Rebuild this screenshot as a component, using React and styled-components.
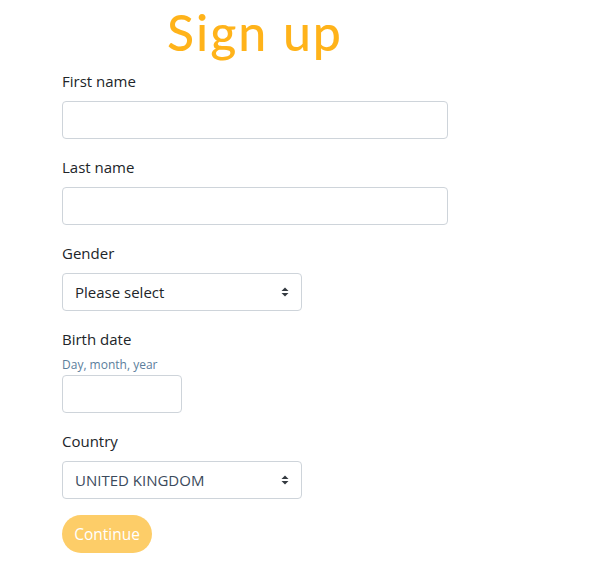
import React from "react";
import styled, { createGlobalStyle } from "styled-components";

const Global = createGlobalStyle`
  html, body { margin: 0; padding: 0; background: #fff; }
  body { font-family: "Open Sans", "Noto Sans", sans-serif; color: #212529; }
  * { box-sizing: border-box; }
`;

const Page = styled.div`
  padding: 0 0 0 62px;
`;

const Form = styled.form`
  width: 386px;
  display: flex;
  flex-direction: column;
`;

const Title = styled.h1`
  margin: 0 0 5px;
  text-align: center;
  font-family: "Lato", sans-serif;
  font-weight: 500;
  font-size: 50px;
  line-height: 64px;
  color: #ffb31a;
  letter-spacing: 2px;
`;

const Group = styled.div`
  display: flex;
  flex-direction: column;
  align-items: flex-start;
  margin-bottom: 16px;
`;

const Label = styled.label`
  font-size: 15px;
  line-height: 24px;
  margin-bottom: ${(p) => (p.$tight ? "4px" : "8px")};
  color: #212529;
`;

const Hint = styled.small`
  font-size: 12px;
  line-height: 20px;
  color: #5b7e9c;
`;

const Input = styled.input`
  width: ${(p) => p.$w || "100%"};
  height: 38px;
  border: 1px solid #ced4da;
  border-radius: 4px;
  padding: 6px 12px;
  font: inherit;
  font-size: 15px;
  background: #fff;
  outline: none;
`;

const SelectBox = styled.div`
  position: relative;
  width: 240px;
  height: 38px;
  border: 1px solid #ced4da;
  border-radius: 4px;
  display: flex;
  align-items: center;
  padding: 0 12px;
  font-size: 15px;
  color: ${(p) => p.$color || "#212529"};
  background: #fff;
`;

const Arrow = styled.svg`
  position: absolute;
  right: 12px;
  top: 50%;
  transform: translateY(-50%);
`;

const Button = styled.button`
  align-self: flex-start;
  height: 38px;
  width: 90px;
  border: none;
  border-radius: 19px;
  background: #fdcd68;
  color: #fff;
  font: inherit;
  font-size: 15.5px;
  padding: 0;
`;

const Chevrons = () => (
  <Arrow width="8" height="10" viewBox="0 0 8 10">
    <path d="M0.5 4 L4 0.5 L7.5 4 Z" fill="#343a40" />
    <path d="M0.5 6 L4 9.5 L7.5 6 Z" fill="#343a40" />
  </Arrow>
);

export default function App() {
  return (
    <>
      <Global />
      <Page>
        <Form onSubmit={(e) => e.preventDefault()}>
          <Title>Sign up</Title>
          <Group>
            <Label>First name</Label>
            <Input type="text" />
          </Group>
          <Group>
            <Label>Last name</Label>
            <Input type="text" />
          </Group>
          <Group>
            <Label>Gender</Label>
            <SelectBox>
              Please select
              <Chevrons />
            </SelectBox>
          </Group>
          <Group>
            <Label $tight>Birth date</Label>
            <Hint>Day, month, year</Hint>
            <Input type="text" $w="120px" />
          </Group>
          <Group>
            <Label>Country</Label>
            <SelectBox $color="#3b4a5c">
              UNITED KINGDOM
              <Chevrons />
            </SelectBox>
          </Group>
          <Button type="submit">Continue</Button>
        </Form>
      </Page>
    </>
  );
}
